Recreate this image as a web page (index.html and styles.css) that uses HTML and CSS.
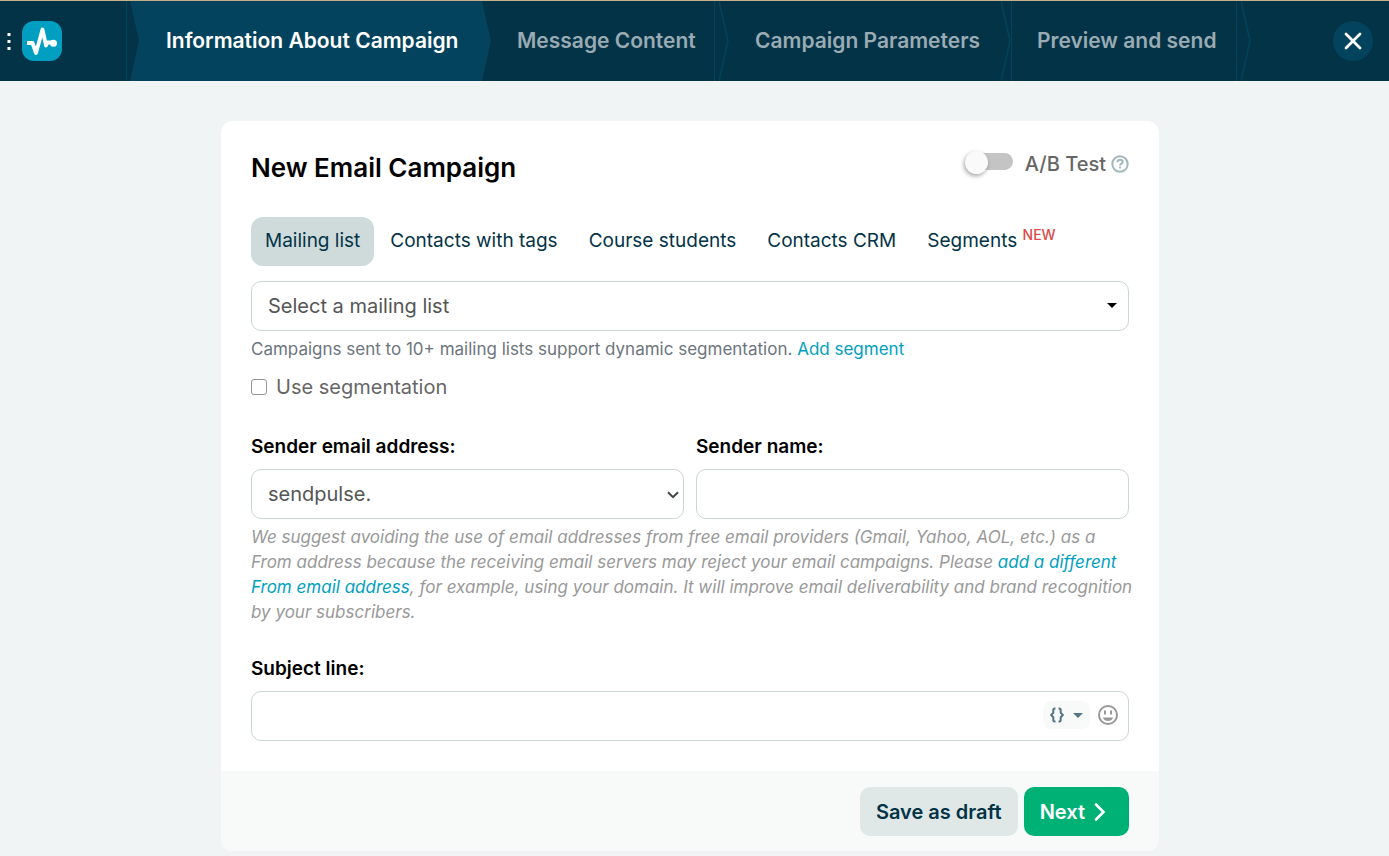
FILE: index.html
```html
<!DOCTYPE html>
<html lang="en">
<head>
<meta charset="utf-8">
<title>New Email Campaign</title>
<link rel="stylesheet" href="styles.css">
</head>
<body>
<header class="topbar">
  <div class="brand">
    <button class="menu" type="button" aria-label="Menu"><svg width="4" height="18" viewBox="0 0 4 18"><path fill="#fff" d="M0.500 1h3v3h-3zM0.500 8h3v3h-3zM0.500 15h3v3h-3z"/></svg></button>
    <a class="logo" href="#" aria-label="SendPulse"><svg width="40" height="40" viewBox="0 0 40 40"><path d="M5 22h5.500l3.500 10 6.500-23.500 3.500 16 1.500-3h5" fill="none" stroke="#fff" stroke-width="3.800" stroke-linejoin="round"/><circle cx="31.500" cy="22.300" r="3.500" fill="#fff"/></svg></a>
  </div>
  <nav class="steps">
    <a class="step step-active" href="#">Information About Campaign</a>
    <a class="step step-line" href="#">Message Content<svg class="arrow" width="10" height="80" viewBox="0 0 10 80"><path d="M0 0l9 40L0 80" fill="none" stroke="#03435d" stroke-width="1.500"/></svg></a>
    <a class="step" href="#">Campaign Parameters<svg class="arrow" width="10" height="80" viewBox="0 0 10 80"><path d="M0 0l9 40L0 80" fill="none" stroke="#03435d" stroke-width="1.500"/></svg></a>
    <a class="step step-line step-last" href="#">Preview and send<svg class="arrow" width="10" height="80" viewBox="0 0 10 80"><path d="M0 0l9 40L0 80" fill="none" stroke="#03435d" stroke-width="1.500"/></svg></a>
  </nav>
  <button class="close" type="button" aria-label="Close"><svg width="18" height="18" viewBox="0 0 18 18"><path d="M2 2l14 14M16 2L2 16" stroke="#fff" stroke-width="2.800" stroke-linecap="round"/></svg></button>
</header>

<main class="page">
  <form class="card">
    <div class="card-body">
      <div class="card-head">
        <h1 class="title">New Email Campaign</h1>
        <label class="ab"><input class="toggle" type="checkbox" role="switch"><span>A/B Test</span><svg width="18" height="18" viewBox="0 0 18 18" fill="none" stroke="#a3b8b9" stroke-width="2"><circle cx="9" cy="9" r="7.700"/><path d="M6.300 7.300c0-1.600 1.200-2.500 2.700-2.500s2.700.9 2.700 2.200c0 1.600-2.600 1.700-2.600 3.500"/><path d="M9.100 11.600v2"/></svg></label>
      </div>

      <div class="tabs">
        <button class="tab tab-active" type="button">Mailing list</button>
        <button class="tab" type="button">Contacts with tags</button>
        <button class="tab" type="button">Course students</button>
        <button class="tab" type="button">Contacts CRM</button>
        <button class="tab" type="button">Segments <sup class="new">NEW</sup></button>
      </div>

      <div class="control">
        <select class="field" aria-label="Mailing list"><option>Select a mailing list</option></select>
        <svg class="caret" width="10" height="5" viewBox="0 0 10 5"><path d="M0 0h10L5 5z"/></svg>
      </div>
      <p class="note">Campaigns sent to 10+ mailing lists support dynamic segmentation. <a href="#">Add segment</a></p>
      <label class="check"><input class="box" type="checkbox">Use segmentation</label>

      <div class="sender">
        <div>
          <label class="label" for="email">Sender email address:</label>
          <div class="control">
            <select class="field" id="email"><option>sendpulse.</option></select>
            <svg class="chevron" width="12" height="8" viewBox="0 0 12 8"><path d="M1 1.200l5 5 5-5" fill="none" stroke="#444" stroke-width="2"/></svg>
          </div>
        </div>
        <div>
          <label class="label" for="name">Sender name:</label>
          <input class="field" id="name" type="text">
        </div>
      </div>
      <p class="hint">We suggest avoiding the use of email addresses from free email providers (Gmail, Yahoo, AOL, etc.) as a From address because the receiving email servers may reject your email campaigns. Please <a href="#">add a different From email address</a>, for example, using your domain. It will improve email deliverability and brand recognition by your subscribers.</p>

      <label class="label" for="subject">Subject line:</label>
      <div class="control">
        <input class="field" id="subject" type="text">
        <div class="tools">
          <button class="vars" type="button" aria-label="Variables"><svg width="14" height="16" viewBox="0 0 14 16" fill="none" stroke="#547583" stroke-width="2"><path d="M5.500 1.500h-.7c-1 0-1.500.6-1.500 1.500v2.800L1.200 8l2.100 2.200V13c0 .9.500 1.500 1.500 1.500h.7M8.500 1.500h.7c1 0 1.500.6 1.500 1.500v2.800L12.800 8l-2.100 2.200V13c0 .9-.5 1.500-1.500 1.500h-.7"/></svg><svg width="10" height="5" viewBox="0 0 10 5"><path fill="#547583" d="M0 0h10L5 5z"/></svg></button>
          <button class="emoji" type="button" aria-label="Insert emoji"><svg width="20" height="20" viewBox="0 0 20 20"><circle cx="10" cy="10" r="9" fill="none" stroke="#999" stroke-width="2"/><path d="M7 5.500v4M13 5.500v4" stroke="#999" stroke-width="2"/><path d="M4.800 12.500h10.400c-.8 2.500-2.800 3.500-5.200 3.500s-4.400-1-5.200-3.500z" fill="#999"/></svg></button>
        </div>
      </div>
    </div>
    <div class="card-foot">
      <button class="btn btn-draft" type="button">Save as draft</button>
      <button class="btn btn-next" type="submit">Next<svg width="12" height="18" viewBox="0 0 12 18"><path d="M2 1.500L9.500 9 2 16.500" fill="none" stroke="#fff" stroke-width="2.600" stroke-linecap="round"/></svg></button>
    </div>
  </form>
</main>
</body>
</html>
```
FILE: styles.css
```css
* { box-sizing: border-box; }
body {
  margin: 0;
  background: #f0f4f5;
  color: #666;
  font: 20px/30px Inter, "Open Sans", sans-serif;
}
button, input, select { font: inherit; }
button { border: 0; background: none; padding: 0; cursor: pointer; }
svg { display: block; flex: none; }
a { color: #009fc1; text-decoration: none; }

.topbar {
  display: flex;
  align-items: stretch;
  height: 81px;
  border-top: 1px solid #c5b08b;
  background: #033347;
}
.brand {
  flex: none;
  display: flex;
  align-items: center;
  gap: 11px;
  width: 127px;
  padding-left: 7px;
  border-right: 1px solid #03435d;
}
.logo { border-radius: 12px; background: #009fc1; }
.steps {
  display: grid;
  grid-template-columns: 361px 228px 282px 240px;
  margin-left: 3px;
}
.step {
  position: relative;
  display: flex;
  align-items: center;
  padding-left: 36px;
  color: #9aabb3;
  font-size: 21px;
  font-weight: 600;
  white-space: nowrap;
}
.step-active {
  background: #03435d;
  color: #fff;
  clip-path: polygon(0 0, calc(100% - 9px) 0, 100% 50%, calc(100% - 9px) 100%, 0 100%, 9px 50%);
}
.step-active + .step { padding-left: 26px; }
.arrow { position: absolute; top: 0; left: 100%; }
.step-line::after {
  content: "";
  position: absolute;
  top: 0;
  right: 4px;
  width: 1px;
  height: 100%;
  background: #03435d;
}
.step-last::before {
  content: "";
  position: absolute;
  top: 0;
  left: 10px;
  width: 1px;
  height: 100%;
  background: #03435d;
}
.close {
  flex: none;
  display: grid;
  place-items: center;
  width: 40px;
  height: 40px;
  margin: auto 16px auto auto;
  border-radius: 50%;
  background: #03435d;
}

.page { padding: 40px 9px 5px 0; }
.card {
  max-width: 938px;
  margin: 0 auto;
  border-radius: 12px;
  background: #fff;
  overflow: hidden;
}
.card-body { padding: 30px; }
.card-head {
  display: flex;
  justify-content: space-between;
  margin-bottom: 32px;
}
.title {
  margin: 0;
  color: #000;
  font-size: 26px;
  line-height: 34px;
  font-weight: 600;
}
.ab {
  display: flex;
  align-items: center;
  height: 26px;
  font-weight: 500;
}
.ab span { margin: 0 5px 0 12px; }
.toggle {
  appearance: none;
  width: 48px;
  height: 17px;
  margin: 0 0 6px;
  border-radius: 9px;
  background: #c4c4c4;
}
.toggle::before {
  content: "";
  display: block;
  width: 23px;
  height: 23px;
  margin-top: -2px;
  border-radius: 50%;
  background: #fafafa;
  box-shadow: -1px 2px 4px rgba(0, 0, 0, .35);
}

.tabs { display: flex; gap: 1px; margin-bottom: 15px; }
.tab {
  height: 49px;
  padding: 0 15px 2px;
  border-radius: 12px;
  color: #033347;
  font-size: 19px;
  white-space: nowrap;
}
.tab-active { padding: 0 14px 2px; background: #cfdbdb; }
.new { color: #dc4a4a; font-size: 14px; line-height: 0; font-weight: 500; }

.control { position: relative; }
.field {
  appearance: none;
  display: block;
  width: 100%;
  height: 50px;
  padding: 0 16px;
  border: 1px solid #cad5d5;
  border-radius: 10px;
  background: #fff;
  color: #555;
}
.caret { position: absolute; top: 22px; right: 12px; pointer-events: none; }
.chevron { position: absolute; top: 22px; right: 5px; pointer-events: none; }
.note { margin: 6px 0 0; color: #6c757d; font-size: 17px; line-height: 25px; }
.check { display: flex; align-items: center; gap: 9px; margin-top: 10px; }
.box {
  appearance: none;
  width: 16px;
  height: 16px;
  margin: 0;
  border: 1px solid #949494;
  border-radius: 3px;
}
.sender {
  display: grid;
  grid-template-columns: 1fr 1fr;
  gap: 12px;
  margin-top: 30px;
}
.label {
  display: block;
  margin-bottom: 7px;
  color: #000;
  font-size: 19px;
  font-weight: 600;
}
.hint {
  margin: 6px -8px 29px 0;
  color: #999;
  font-size: 17px;
  line-height: 25px;
  font-style: italic;
}
.tools {
  position: absolute;
  top: 10px;
  right: 11px;
  display: flex;
  align-items: center;
  gap: 8px;
}
.vars {
  display: flex;
  align-items: center;
  gap: 9px;
  height: 28px;
  padding: 0 7px;
  border-radius: 8px;
  background: #f8faf9;
}
.card-foot {
  display: flex;
  justify-content: flex-end;
  gap: 6px;
  padding: 16px 30px 15px;
  background: #f8faf9;
}
.btn {
  display: flex;
  align-items: center;
  gap: 9px;
  height: 49px;
  padding: 0 16px;
  border-radius: 10px;
  font-weight: 600;
}
.btn-draft { background: #e0e8e7; color: #033347; }
.btn-next { background: #00b176; color: #fff; padding-right: 23px; }
```
